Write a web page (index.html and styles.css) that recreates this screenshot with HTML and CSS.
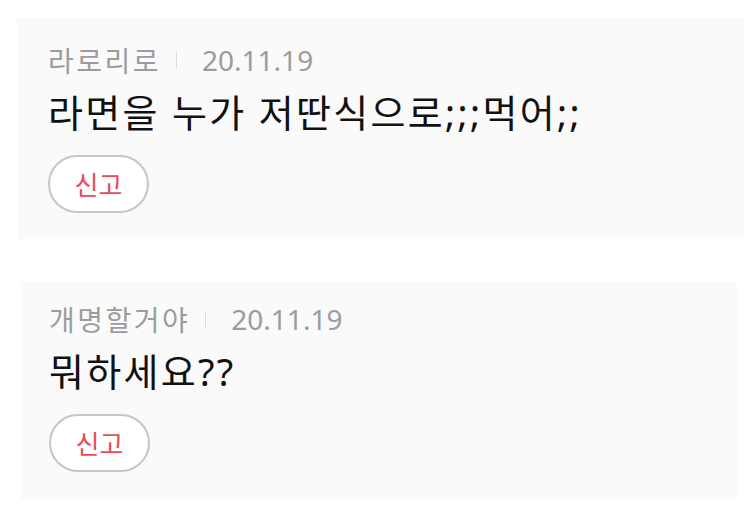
FILE: index.html
```html
<!DOCTYPE html>
<html lang="ko">
<head>
    <meta charset="UTF-8">
    <meta name="viewport" content="width=device-width, initial-scale=1.0">
    <title>댓글</title>
    <link rel="stylesheet" href="styles.css">
</head>
<body>
    <div class="comments">
        <div class="comment">
            <div class="comment-meta">
                <span class="nickname">라로리로</span>
                <span class="divider"></span>
                <span class="date">20.11.19</span>
            </div>
            <div class="comment-text">라면을 누가 저딴식으로;;;먹어;;</div>
            <button class="report-button">신고</button>
        </div>
        <div class="comment second">
            <div class="comment-meta">
                <span class="nickname">개명할거야</span>
                <span class="divider"></span>
                <span class="date">20.11.19</span>
            </div>
            <div class="comment-text">뭐하세요??</div>
            <button class="report-button">신고</button>
        </div>
    </div>
</body>
</html>
```

FILE: styles.css
```css
* {
    margin: 0;
    padding: 0;
    box-sizing: border-box;
}

body {
    font-family: 'Noto Sans', 'Noto Sans CJK KR', sans-serif;
    background: #fff;
    color: #111;
}

.comments {
    display: flex;
    flex-direction: column;
    gap: 43px;
    padding-top: 18px;
}

.comment {
    background: #fafafa;
    margin-left: 17px;
    width: 727px;
    padding: 22px 0 26px 31px;
}

.comment.second {
    margin-left: 21px;
    width: 716px;
    padding: 17px 0 27px 28px;
}

.comment-meta {
    display: flex;
    align-items: center;
    height: 40px;
    font-size: 28px;
    color: #9c9c9c;
}

.nickname {
    letter-spacing: 2.5px;
}

.divider {
    width: 1px;
    height: 17px;
    background: #dcdcdc;
    margin: 0 25px 0 15px;
}

.comment-text {
    font-size: 38px;
    line-height: 52px;
    letter-spacing: 2.3px;
    margin-top: 6px;
    color: #111;
}

.report-button {
    margin-top: 17px;
    width: 101px;
    height: 58px;
    border: 2px solid #c6c6c6;
    border-radius: 29px;
    background: #fff;
    color: #eb4a57;
    font-family: inherit;
    font-size: 26px;
    cursor: pointer;
}
```
